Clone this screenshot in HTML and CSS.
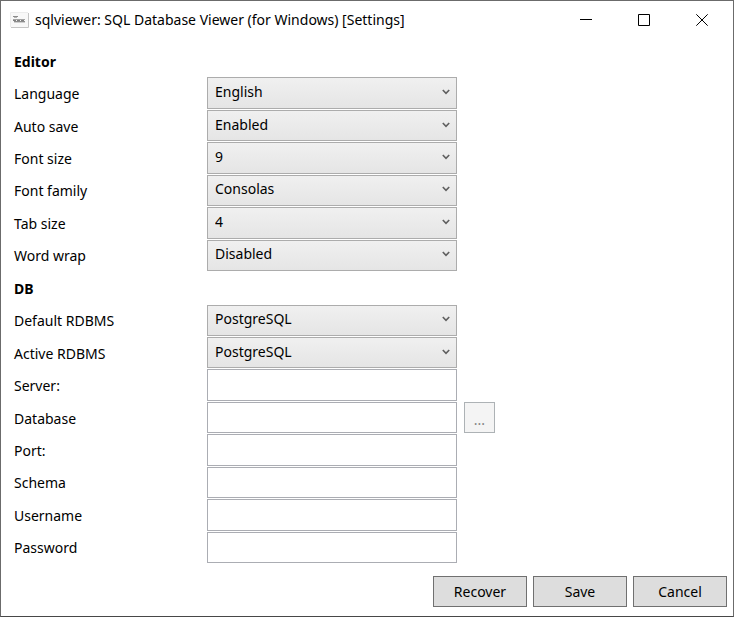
FILE: index.html
```html
<!DOCTYPE html>
<html lang="en">
<head>
<meta charset="utf-8">
<meta name="viewport" content="width=device-width, initial-scale=1">
<title>sqlviewer: SQL Database Viewer (for Windows) [Settings]</title>
<link rel="stylesheet" href="styles.css">
</head>
<body>
<svg class="defs" aria-hidden="true">
  <symbol id="chevron" viewBox="0 0 8 6"><path d="M0.8 1 L4 4.4 L7.2 1" fill="none" stroke="#606060" stroke-width="1.6"/></symbol>
</svg>
<main class="window">
  <header class="titlebar">
    <svg class="app-icon" viewBox="0 0 20 17" aria-hidden="true">
      <path d="M1 15.5H18.5V1" fill="none" stroke="#c4c4c4"/>
      <path d="M0.5 15V0.5H18" fill="none" stroke="#ececec"/>
      <rect x="1" y="1" width="17" height="14" fill="#f8f8f8"/>
      <path d="M3 4.5H8" stroke="#8c8c8c"/>
      <path d="M4 5.5H7" stroke="#b4b4b4"/>
      <path d="M3 7.5H15" stroke="#a4a4a4"/>
      <path d="M3 8.5H15" stroke="#808080" stroke-dasharray="3 1"/>
      <path d="M4 9.5H15" stroke="#8c8c8c"/>
      <path d="M4 10.5H15" stroke="#d0d0d0"/>
    </svg>
    <h1 class="title">sqlviewer: SQL Database Viewer (for Windows) [Settings]</h1>
    <div class="caption-buttons">
      <button class="caption" type="button" aria-label="Minimize"><svg viewBox="0 0 12 12"><path d="M0 5.5H12"/></svg></button>
      <button class="caption" type="button" aria-label="Maximize"><svg viewBox="0 0 12 12"><path d="M0.5 0.5H11.5V11.5H0.5Z"/></svg></button>
      <button class="caption" type="button" aria-label="Close"><svg viewBox="0 0 12 12"><path d="M0.3 0.3L11.7 11.7M11.7 0.3L0.3 11.7"/></svg></button>
    </div>
  </header>
  <form class="settings" id="settings">
    <h2 class="section">Editor</h2>
    <div class="row"><label for="language">Language</label><div class="combo"><select id="language"><option>English</option></select><svg class="arrow"><use href="#chevron"/></svg></div></div>
    <div class="row"><label for="autosave">Auto save</label><div class="combo"><select id="autosave"><option>Enabled</option><option>Disabled</option></select><svg class="arrow"><use href="#chevron"/></svg></div></div>
    <div class="row"><label for="fontsize">Font size</label><div class="combo"><select id="fontsize"><option>9</option></select><svg class="arrow"><use href="#chevron"/></svg></div></div>
    <div class="row"><label for="fontfamily">Font family</label><div class="combo"><select id="fontfamily"><option>Consolas</option></select><svg class="arrow"><use href="#chevron"/></svg></div></div>
    <div class="row"><label for="tabsize">Tab size</label><div class="combo"><select id="tabsize"><option>4</option></select><svg class="arrow"><use href="#chevron"/></svg></div></div>
    <div class="row"><label for="wordwrap">Word wrap</label><div class="combo"><select id="wordwrap"><option>Disabled</option><option>Enabled</option></select><svg class="arrow"><use href="#chevron"/></svg></div></div>
    <h2 class="section">DB</h2>
    <div class="row"><label for="default-rdbms">Default RDBMS</label><div class="combo"><select id="default-rdbms"><option>PostgreSQL</option></select><svg class="arrow"><use href="#chevron"/></svg></div></div>
    <div class="row"><label for="active-rdbms">Active RDBMS</label><div class="combo"><select id="active-rdbms"><option>PostgreSQL</option></select><svg class="arrow"><use href="#chevron"/></svg></div></div>
    <div class="row"><label for="server">Server:</label><input id="server" type="text"></div>
    <div class="row"><label for="database">Database</label><input id="database" type="text"><button class="browse" type="button" aria-label="Browse for database" disabled>...</button></div>
    <div class="row"><label for="port">Port:</label><input id="port" type="text"></div>
    <div class="row"><label for="schema">Schema</label><input id="schema" type="text"></div>
    <div class="row"><label for="username">Username</label><input id="username" type="text"></div>
    <div class="row"><label for="password">Password</label><input id="password" type="password"></div>
  </form>
  <footer class="actions">
    <button class="action" type="button">Recover</button>
    <button class="action" type="submit" form="settings">Save</button>
    <button class="action" type="button">Cancel</button>
  </footer>
</main>
</body>
</html>
```

FILE: styles.css
```css
* {
  box-sizing: border-box;
}

body {
  margin: 0;
  background: #fff;
  color: #000;
  font-family: "Segoe UI", "Noto Sans", sans-serif;
  font-size: 14px;
  line-height: 20px;
}

button,
input,
select {
  margin: 0;
  border-radius: 0;
  color: inherit;
  font: inherit;
}

.defs {
  display: none;
}

.window {
  display: flex;
  flex-direction: column;
  min-height: 100vh;
  border: 1px solid #6b6b6b;
  border-bottom-color: #484848;
}

.titlebar {
  display: flex;
  align-items: center;
  height: 38px;
  padding: 0 2px 0 9px;
}

.app-icon {
  flex: none;
  width: 20px;
  height: 17px;
  margin-right: 5px;
}

.title {
  flex: 1;
  margin: 0;
  font-size: 14px;
  font-weight: 400;
  white-space: nowrap;
}

.caption-buttons {
  display: flex;
  align-self: stretch;
}

.caption {
  display: grid;
  place-items: center;
  width: 58px;
  padding: 0;
  border: 0;
  background: none;
}

.caption svg {
  width: 12px;
  height: 12px;
  fill: none;
  stroke: #000;
}

.settings {
  display: grid;
  flex: 1;
  grid-auto-rows: minmax(28px, 1fr);
  row-gap: 1px;
  padding: 6px 13px 1px;
}

.section {
  align-self: center;
  margin: 0;
  padding-top: 2px;
  font-size: 14px;
  font-weight: 700;
}

.row {
  display: grid;
  grid-template-columns: 186px minmax(0, 250px) 31px;
  column-gap: 7px;
  align-items: stretch;
}

.row label {
  align-self: center;
  padding-top: 2px;
}

.combo {
  position: relative;
  display: grid;
}

.combo select {
  width: 100%;
  padding: 0 24px 2px 7px;
  border: 1px solid #acacac;
  background: linear-gradient(#f0f0f0, #e5e5e5);
  appearance: none;
}

.arrow {
  position: absolute;
  top: 50%;
  right: 7px;
  width: 8px;
  height: 6px;
  margin-top: -4px;
  pointer-events: none;
}

.row input {
  width: 100%;
  padding: 0 6px;
  border: 1px solid #abadb3;
  background: #fff;
}

.browse {
  padding: 4px 0 0;
  border: 1px solid #adb2b5;
  background: #f4f4f4;
}

.browse:disabled {
  color: #838383;
}

.actions {
  display: flex;
  justify-content: flex-end;
  gap: 6px;
  padding: 12px 6px 9px;
}

.action {
  width: 94px;
  height: 31px;
  padding: 0;
  border: 1px solid #707070;
  background: #ddd;
}
```
